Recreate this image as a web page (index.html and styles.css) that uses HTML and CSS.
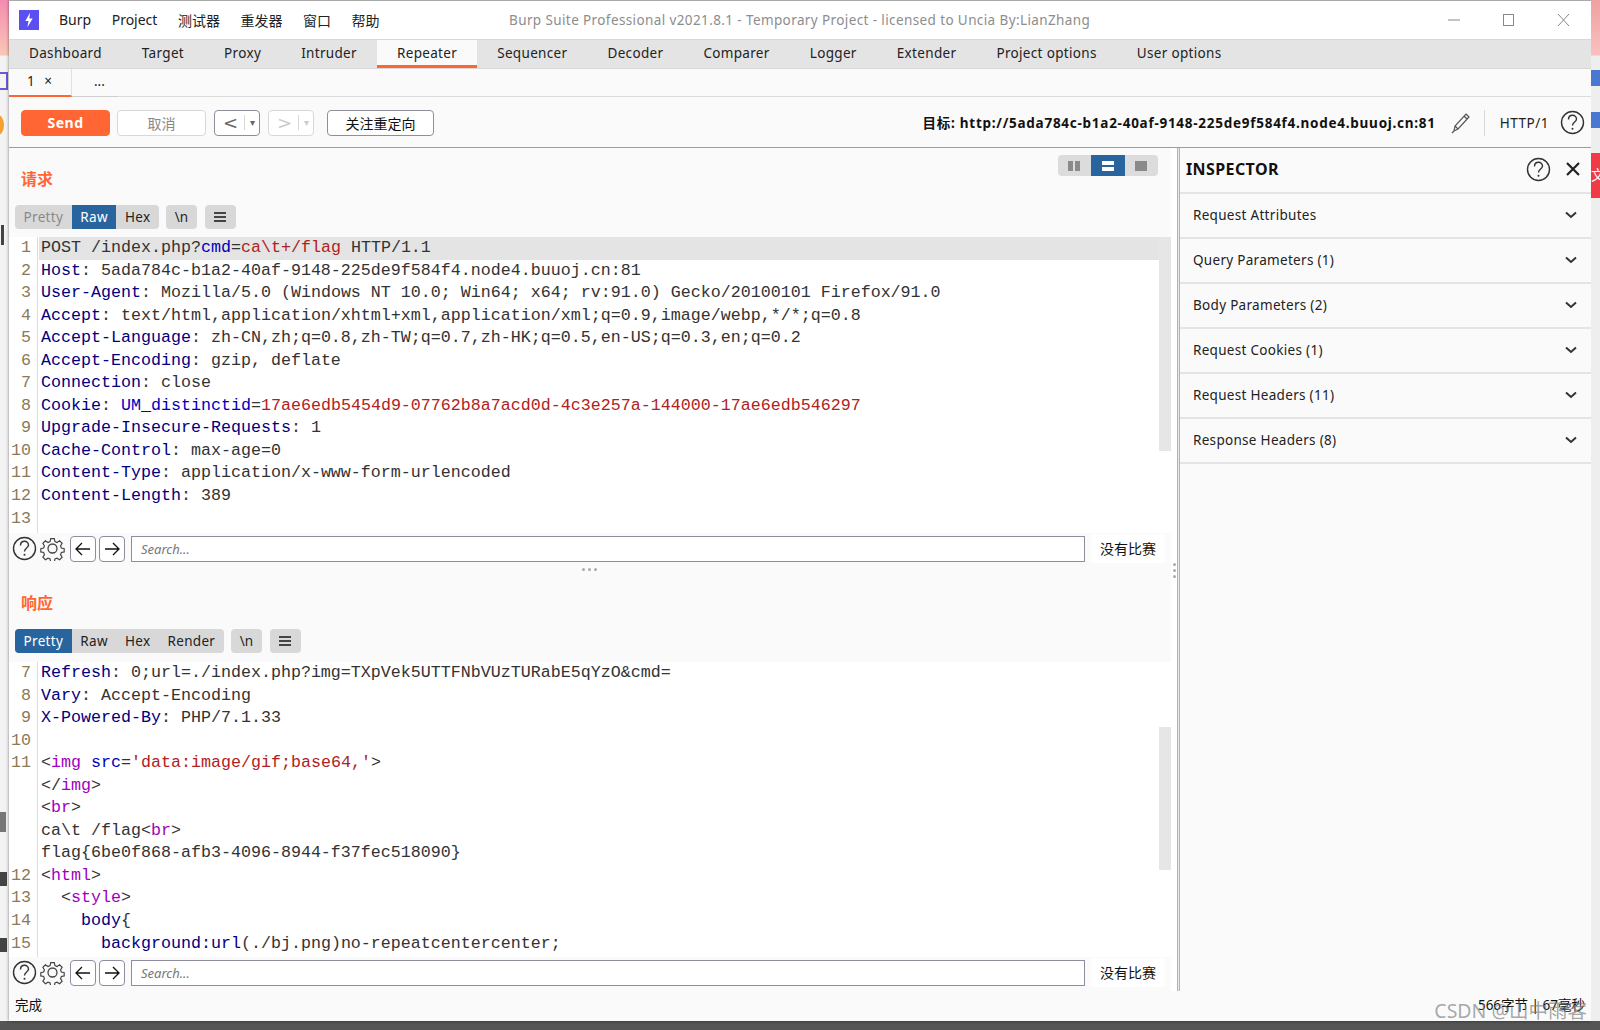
FILE: index.html
```html
<!DOCTYPE html>
<html lang="zh-CN">
<head>
  <meta charset="UTF-8">
  <title>Burp Suite Professional</title>
  <link rel="stylesheet" href="styles.css">
</head>
<body>
  <div class="desktop">
    <div class="strip strip-left">
      <i class="bit home"></i><i class="bit sun"></i><i class="bit dark d1"></i><i class="bit dark d2"></i><i class="bit dark d3"></i><i class="bit dark d4"></i>
    </div>
    <div class="window">
      <div class="titlebar">
        <svg class="logo" width="20" height="20" viewBox="0 0 19 19"><rect width="19" height="19" fill="#5a4ff0"/><path d="M10.500 2.500 6 10.500h3l-1 6 5-8.500h-3.200z" fill="#fff"/></svg>
        <nav class="menu"><span>Burp</span><span>Project</span><span>测试器</span><span>重发器</span><span>窗口</span><span>帮助</span></nav>
        <div class="title">Burp Suite Professional v2021.8.1 - Temporary Project - licensed to Uncia By:LianZhang</div>
        <div class="winctl">
          <svg width="14" height="14" viewBox="0 0 14 14"><path d="M1 7h12" stroke="#888"/></svg>
          <svg width="14" height="14" viewBox="0 0 14 14"><rect x="1.500" y="1.500" width="10" height="11" fill="none" stroke="#888"/></svg>
          <svg width="14" height="14" viewBox="0 0 14 14"><path d="M1 1l11 12M12 1 1 13" stroke="#888" fill="none"/></svg>
        </div>
      </div>

      <div class="tabs">
        <span class="tab">Dashboard</span><span class="tab">Target</span><span class="tab">Proxy</span><span class="tab">Intruder</span><span class="tab active">Repeater</span><span class="tab">Sequencer</span><span class="tab">Decoder</span><span class="tab">Comparer</span><span class="tab">Logger</span><span class="tab">Extender</span><span class="tab">Project options</span><span class="tab">User options</span>
      </div>

      <div class="subtabs">
        <div class="subtab active">1 <i>×</i></div>
        <div class="subtab more">...</div>
      </div>

      <div class="toolbar">
        <button class="btn send">Send</button>
        <button class="btn cancel">取消</button>
        <div class="btn nav"><b>&lt;</b><span class="sep"></span><em>▾</em></div>
        <div class="btn nav off"><b>&gt;</b><span class="sep"></span><em>▾</em></div>
        <button class="btn follow">关注重定向</button>
        <div class="target">目标: http://5ada784c-b1a2-40af-9148-225de9f584f4.node4.buuoj.cn:81</div>
        <svg class="pencil" width="22" height="24" viewBox="0 0 22 24"><path d="M16 3l3 3L8 18l-4 2 1-5zM14 5l3 3M5 15l3 3M4 20l-2 2" fill="none" stroke="#555" stroke-width="1.200"/></svg>
        <span class="proto">HTTP/1</span>
        <svg class="help" width="25" height="25" viewBox="0 0 25 25"><use href="#help"/></svg>
      </div>

      <div class="main">
        <div class="panes">
          <section class="pane req">
            <div class="layout-btns">
              <span><i class="b2v"></i></span><span class="on"><i class="b2h"></i></span><span><i class="b1"></i></span>
            </div>
            <h2>请求</h2>
            <div class="viewbar">
              <div class="seg"><span class="dim">Pretty</span><span class="on">Raw</span><span>Hex</span></div>
              <span class="chip">\n</span>
              <span class="chip burger"><i></i></span>
            </div>
            <div class="editor ed-req">
              <div class="gutter"><span>1</span><span>2</span><span>3</span><span>4</span><span>5</span><span>6</span><span>7</span><span>8</span><span>9</span><span>10</span><span>11</span><span>12</span><span>13</span></div>
              <div class="code">
                <div class="ln hl">POST /index.php?<span class="k">cmd</span>=<span class="v">ca\t+/flag</span> HTTP/1.1</div>
                <div class="ln"><span class="h">Host</span>: 5ada784c-b1a2-40af-9148-225de9f584f4.node4.buuoj.cn:81</div>
                <div class="ln"><span class="h">User-Agent</span>: Mozilla/5.0 (Windows NT 10.0; Win64; x64; rv:91.0) Gecko/20100101 Firefox/91.0</div>
                <div class="ln"><span class="h">Accept</span>: text/html,application/xhtml+xml,application/xml;q=0.9,image/webp,*/*;q=0.8</div>
                <div class="ln"><span class="h">Accept-Language</span>: zh-CN,zh;q=0.8,zh-TW;q=0.7,zh-HK;q=0.5,en-US;q=0.3,en;q=0.2</div>
                <div class="ln"><span class="h">Accept-Encoding</span>: gzip, deflate</div>
                <div class="ln"><span class="h">Connection</span>: close</div>
                <div class="ln"><span class="h">Cookie</span>: <span class="k">UM_distinctid</span>=<span class="v">17ae6edb5454d9-07762b8a7acd0d-4c3e257a-144000-17ae6edb546297</span></div>
                <div class="ln"><span class="h">Upgrade-Insecure-Requests</span>: 1</div>
                <div class="ln"><span class="h">Cache-Control</span>: max-age=0</div>
                <div class="ln"><span class="h">Content-Type</span>: application/x-www-form-urlencoded</div>
                <div class="ln"><span class="h">Content-Length</span>: 389</div>
              </div>
              <div class="scroll s-req"></div>
            </div>
            <div class="searchbar">
              <svg width="25" height="25" viewBox="0 0 25 25"><use href="#help"/></svg>
              <svg width="25" height="25" viewBox="0 0 25 25"><use href="#gear"/></svg>
              <span class="arrow"><svg width="18" height="14" viewBox="0 0 18 14"><path d="M2 7h14M8 1 2 7l6 6" fill="none" stroke="#111" stroke-width="1.300"/></svg></span>
              <span class="arrow"><svg width="18" height="14" viewBox="0 0 18 14"><path d="M2 7h14M10 1l6 6-6 6" fill="none" stroke="#111" stroke-width="1.300"/></svg></span>
              <div class="search">Search...</div>
              <span class="nomatch">没有比赛</span>
            </div>
            <div class="grip"><i></i><i></i><i></i></div>
          </section>

          <section class="pane res">
            <h2>响应</h2>
            <div class="viewbar">
              <div class="seg"><span class="on">Pretty</span><span>Raw</span><span>Hex</span><span>Render</span></div>
              <span class="chip">\n</span>
              <span class="chip burger"><i></i></span>
            </div>
            <div class="editor ed-res">
              <div class="gutter"><span>7</span><span>8</span><span>9</span><span>10</span><span>11</span><span>&nbsp;</span><span>&nbsp;</span><span>&nbsp;</span><span>&nbsp;</span><span>12</span><span>13</span><span>14</span><span>15</span></div>
              <div class="code">
                <div class="ln"><span class="h">Refresh</span>: 0;url=./index.php?img=TXpVek5UTTFNbVUzTURabE5qYzO&amp;cmd=</div>
                <div class="ln"><span class="h">Vary</span>: Accept-Encoding</div>
                <div class="ln"><span class="h">X-Powered-By</span>: PHP/7.1.33</div>
                <div class="ln">&nbsp;</div>
                <div class="ln">&lt;<span class="t">img</span> <span class="k">src</span>=<span class="v">'data:image/gif;base64,'</span>&gt;</div>
                <div class="ln">&lt;/<span class="t">img</span>&gt;</div>
                <div class="ln">&lt;<span class="t">br</span>&gt;</div>
                <div class="ln">ca\t /flag&lt;<span class="t">br</span>&gt;</div>
                <div class="ln">flag{6be0f868-afb3-4096-8944-f37fec518090}</div>
                <div class="ln">&lt;<span class="t">html</span>&gt;</div>
                <div class="ln">  &lt;<span class="t">style</span>&gt;</div>
                <div class="ln">    <span class="h">body</span>{</div>
                <div class="ln">      <span class="h">background:url</span>(./bj.png)no-repeatcentercenter;</div>
              </div>
              <div class="scroll s-res"></div>
            </div>
            <div class="searchbar">
              <svg width="25" height="25" viewBox="0 0 25 25"><use href="#help"/></svg>
              <svg width="25" height="25" viewBox="0 0 25 25"><use href="#gear"/></svg>
              <span class="arrow"><svg width="18" height="14" viewBox="0 0 18 14"><path d="M2 7h14M8 1 2 7l6 6" fill="none" stroke="#111" stroke-width="1.300"/></svg></span>
              <span class="arrow"><svg width="18" height="14" viewBox="0 0 18 14"><path d="M2 7h14M10 1l6 6-6 6" fill="none" stroke="#111" stroke-width="1.300"/></svg></span>
              <div class="search">Search...</div>
              <span class="nomatch">没有比赛</span>
            </div>
          </section>
        </div>

        <div class="splitter"><div class="dots"><i></i><i></i><i></i></div></div>

        <aside class="inspector">
          <div class="insp-head">
            <h3>INSPECTOR</h3>
            <svg width="25" height="25" viewBox="0 0 25 25"><use href="#help"/></svg>
            <svg class="close" width="16" height="16" viewBox="0 0 16 16"><path d="M2 2l12 12M14 2 2 14" stroke="#222" stroke-width="2.200"/></svg>
          </div>
          <div class="insp-row">Request Attributes<svg width="12" height="8" viewBox="0 0 12 8"><path d="M1 1.500 6 6l5-4.500" fill="none" stroke="#333" stroke-width="2"/></svg></div>
          <div class="insp-row">Query Parameters (1)<svg width="12" height="8" viewBox="0 0 12 8"><path d="M1 1.500 6 6l5-4.500" fill="none" stroke="#333" stroke-width="2"/></svg></div>
          <div class="insp-row">Body Parameters (2)<svg width="12" height="8" viewBox="0 0 12 8"><path d="M1 1.500 6 6l5-4.500" fill="none" stroke="#333" stroke-width="2"/></svg></div>
          <div class="insp-row">Request Cookies (1)<svg width="12" height="8" viewBox="0 0 12 8"><path d="M1 1.500 6 6l5-4.500" fill="none" stroke="#333" stroke-width="2"/></svg></div>
          <div class="insp-row">Request Headers (11)<svg width="12" height="8" viewBox="0 0 12 8"><path d="M1 1.500 6 6l5-4.500" fill="none" stroke="#333" stroke-width="2"/></svg></div>
          <div class="insp-row">Response Headers (8)<svg width="12" height="8" viewBox="0 0 12 8"><path d="M1 1.500 6 6l5-4.500" fill="none" stroke="#333" stroke-width="2"/></svg></div>
        </aside>
      </div>

      <div class="statusbar">
        <span>完成</span>
        <span class="stats">566字节 | 67毫秒</span>
      </div>
      <div class="watermark">CSDN @山中雨客</div>
    </div>
    <div class="strip strip-right">
      <i class="bit blue b-a"></i><i class="bit blue b-b"></i><span class="red">文</span>
    </div>
  </div>
  <div class="taskbar"></div>

  <svg class="defs" width="0" height="0">
    <symbol id="help" viewBox="0 0 25 25"><circle cx="12.500" cy="12.500" r="11" fill="none" stroke="#333" stroke-width="1.400"/><path d="M8.500 9.500c0-5.500 8-5.500 8-.5 0 3-4 3-4 6.500" fill="none" stroke="#333" stroke-width="1.400"/><circle cx="12.500" cy="18.800" r="1" fill="#333"/></symbol>
    <symbol id="gear" viewBox="0 0 25 25"><path d="M10.500 1.500h4l.7 3.300 2.300 1 2.900-1.800 2.800 2.800-1.800 2.900 1 2.300 3.100.7v3.600l-3.100.7-1 2.300 1.800 2.900-2.800 2.800-2.900-1.800-2.300 1-.7 3.300h-4l-.7-3.300-2.300-1-2.900 1.800-2.800-2.800 1.800-2.900-1-2.300-3.100-.7v-3.600l3.100-.7 1-2.300-1.800-2.900 2.800-2.800 2.900 1.800 2.300-1z" transform="translate(1.250 1.250) scale(.9)" fill="none" stroke="#444" stroke-width="1.300"/><circle cx="12.500" cy="12.500" r="4.500" fill="none" stroke="#444" stroke-width="1.300"/></symbol>
  </svg>
</body>
</html>
```

FILE: styles.css
```css
* {
  box-sizing: border-box;
}

html, body {
  margin: 0;
  height: 100%;
  overflow: hidden;
}

body {
  font-family: "Noto Sans", "Noto Sans CJK SC", sans-serif;
  font-size: 13.500px;
  color: #222;
  background: #555;
}

.desktop {
  display: flex;
  height: 1021px;
}

.taskbar {
  height: 9px;
  background: #555;
}

.defs {
  position: absolute;
}

.strip {
  position: relative;
  width: 9px;
  flex: none;
  background: #f3f3f3;
  overflow: hidden;
}

.strip-left {
  background: linear-gradient(#f48cb0 0, #f9c7b5 55px, #f3f3f3 56px);
}

.strip-right {
  background: linear-gradient(#f0a0a0 0, #f9c0c0 55px, #eeeeee 56px);
}

.bit {
  position: absolute;
  display: block;
}

.home {
  top: 72px;
  left: 0;
  width: 8px;
  height: 18px;
  border: 2px solid #6a5ad0;
  border-left: 0;
}

.sun {
  top: 115px;
  left: -8px;
  width: 12px;
  height: 20px;
  border-radius: 50%;
  background: #f5a030;
}

.dark {
  left: 0;
  width: 9px;
  background: #444;
}

.d1 { top: 225px; height: 20px; left: 1px; width: 3px; }
.d2 { top: 812px; height: 20px; width: 6px; background: #777; }
.d3 { top: 872px; height: 14px; width: 7px; }
.d4 { top: 938px; height: 14px; width: 7px; }

.blue {
  left: 0;
  width: 9px;
  height: 16px;
  background: #4a78d0;
}

.b-a { top: 70px; }
.b-b { top: 112px; }

.red {
  position: absolute;
  top: 153px;
  left: 0;
  width: 9px;
  height: 45px;
  background: #ee3b46;
  color: #fff;
  overflow: hidden;
  line-height: 45px;
}

.window {
  position: relative;
  flex: 1;
  min-width: 0;
  display: flex;
  flex-direction: column;
  background: #fafafa;
  border-top: 1px solid #aaa;
  box-shadow: 0 0 3px rgba(0, 0, 0, .5);
}

.titlebar {
  display: flex;
  align-items: center;
  height: 38px;
  background: #fff;
  padding-left: 10px;
  flex: none;
}

.menu {
  display: flex;
  margin-left: 20px;
  gap: 20.500px;
  font-size: 14px;
}

.title {
  position: absolute;
  left: 500px;
  top: 10px;
  color: #8d8d8d;
  font-size: 13.500px;
  letter-spacing: .39px;
}

.winctl {
  margin-left: auto;
  display: flex;
  gap: 41px;
  padding-right: 20px;
}

.tabs {
  display: flex;
  height: 30px;
  flex: none;
  background: #e4e4e4;
  border-top: 1px solid #d8d8d8;
  border-bottom: 1px solid #d8d8d8;
  align-items: stretch;
}

.tab {
  padding: 4px 20px 0;
  text-align: center;
  font-size: 13.500px;
  letter-spacing: .33px;
}

.tab.active {
  background: #fafafa;
  border-bottom: 3px solid #ff6633;
}

.subtabs {
  display: flex;
  height: 28px;
  flex: none;
  border-bottom: 1px solid #dcdcdc;
}

.subtab {
  width: 62px;
  padding: 3px 0 0 18px;
  font-size: 13.500px;
  border-right: 1px solid #e0e0e0;
}

.subtab i {
  font-style: normal;
  margin-left: 6px;
}

.subtab.active {
  width: 63px;
  border-bottom: 2px solid #ff6633;
  height: 28px;
}

.subtab.more {
  width: 46px;
  padding-left: 22px;
  border-right: 0;
  border-bottom: 1px solid #d0d0d0;
  height: 28px;
}

.toolbar {
  display: flex;
  align-items: center;
  height: 51px;
  flex: none;
  padding: 1px 0 0 12px;
  border-bottom: 1px solid #9c9ca8;
  background: #fafafa;
}

.btn {
  height: 26px;
  border-radius: 4px;
  border: 1px solid #d8d8d8;
  background: #fff;
  font-family: inherit;
  font-size: 14px;
  padding: 0;
}

.send {
  width: 89px;
  margin-right: 7px;
  background: #ff6633;
  border-color: #ff6633;
  color: #fff;
  font-weight: 700;
  letter-spacing: .5px;
}

.cancel {
  width: 89px;
  margin-right: 8px;
  color: #888;
}

.nav {
  display: flex;
  align-items: center;
  width: 46px;
  margin-right: 8px;
  border-color: #8e8e9e;
  padding-left: 8px;
  font-family: "DejaVu Sans", sans-serif;
  color: #666;
}

.nav.off {
  margin-right: 13px;
  border-color: #d8d8d8;
  color: #ccc;
}

.nav b {
  font-weight: 400;
  font-size: 18px;
  line-height: 20px;
}

.nav .sep {
  width: 1px;
  height: 15px;
  background: #d8d8d8;
  margin: 0 5px 0 6px;
}

.nav em {
  font-style: normal;
  font-size: 10px;
}

.follow {
  width: 107px;
  border-color: #8e8e9e;
  color: #111;
}

.target {
  margin-left: auto;
  margin-bottom: 2px;
  font-weight: 700;
  font-size: 13.500px;
  letter-spacing: .74px;
  color: #111;
}

.pencil {
  margin-left: 14px;
}

.proto {
  margin-left: 12px;
  padding-left: 15px;
  border-left: 1px solid #d8d8d8;
  height: 26px;
  line-height: 26px;
  letter-spacing: .5px;
}

.help {
  margin-left: 11px;
  margin-right: 6px;
}

.main {
  display: flex;
  flex: 1;
  min-height: 0;
}

.panes {
  width: 1162px;
  flex: none;
  display: flex;
  flex-direction: column;
}

.pane {
  position: relative;
}

.pane.req {
  height: 423px;
}

.pane.res {
  flex: 1;
}

.pane h2 {
  margin: 0;
  padding: 20px 0 0 12px;
  height: 57px;
  font-size: 16px;
  font-weight: 700;
  line-height: 22px;
  color: #ff6633;
}

.res h2 {
  height: 58px;
  padding-top: 21px;
}

.layout-btns {
  position: absolute;
  top: 7px;
  right: 13px;
  display: flex;
  border-radius: 4px;
  overflow: hidden;
}

.layout-btns span {
  width: 33.500px;
  height: 21px;
  background: #dcdcdc;
  display: flex;
  align-items: center;
  justify-content: center;
}

.layout-btns span.on {
  background: #28659f;
}

.layout-btns i {
  display: block;
  width: 12px;
  height: 10px;
  background: #8a8a8a;
}

.layout-btns .b2v {
  background: linear-gradient(90deg, #8a8a8a 5px, transparent 5px, transparent 7px, #8a8a8a 7px);
}

.layout-btns .b2h {
  background: linear-gradient(#fff 4px, transparent 4px, transparent 6px, #fff 6px);
}

.viewbar {
  display: flex;
  gap: 7px;
  height: 24px;
  padding-left: 6px;
}

.seg {
  display: flex;
  border-radius: 4px;
  overflow: hidden;
  background: #d8d8d8;
}

.seg span {
  padding: 0 8.600px;
  line-height: 24px;
  font-size: 13.500px;
  letter-spacing: .3px;
}

.seg span.on {
  background: #28659f;
  color: #fff;
}

.seg span.dim {
  color: #8a8a8a;
}

.chip {
  display: flex;
  align-items: center;
  justify-content: center;
  height: 24px;
  width: 31px;
  background: #d8d8d8;
  border-radius: 4px;
}

.burger {
  margin-left: 1px;
}

.burger i {
  display: block;
  width: 12px;
  height: 10px;
  border-top: 2px solid #444;
  border-bottom: 2px solid #444;
  background: linear-gradient(transparent 2px, #444 2px, #444 4px, transparent 4px);
}

.editor {
  position: relative;
  display: flex;
  margin-top: 8px;
  background: #fff;
  overflow: hidden;
}

.ed-req {
  height: 296px;
}

.ed-res {
  margin-top: 9px;
  height: 295px;
}

.gutter {
  width: 29px;
  flex: none;
  border-right: 1px solid #ddd;
  display: flex;
  flex-direction: column;
  padding-right: 6px;
  text-align: right;
}

.gutter span,
.code {
  font-family: "Liberation Mono", monospace;
  font-size: 16.660px;
  line-height: 22.550px;
}

.gutter span {
  display: block;
  color: #8a7a5a;
  height: 22.550px;
}

.code {
  flex: 1;
  padding-left: 3px;
  color: #333;
}

.ln {
  height: 22.550px;
  white-space: pre;
}

.ln.hl {
  margin-left: -2px;
  padding-left: 2px;
  background: #e4e4e4;
}

.code .h {
  color: #000080;
}

.code .k {
  color: #0000c0;
}

.code .v {
  color: #b02222;
}

.code .t {
  color: #a000c0;
}

.scroll {
  position: absolute;
  right: 0;
  width: 12px;
  background: #e6e6e6;
}

.s-req {
  top: 0;
  height: 214px;
}

.s-res {
  top: 65px;
  height: 143px;
}

.searchbar {
  display: flex;
  align-items: center;
  height: 31px;
  padding-left: 3px;
  gap: 3px;
  background: #fafafa;
}

.arrow {
  width: 26px;
  height: 26px;
  border: 1px solid #8e8e9e;
  border-radius: 4px;
  display: flex;
  align-items: center;
  justify-content: center;
  background: #fff;
}

.arrow:nth-of-type(1) {
  margin-left: 2px;
}

.search {
  width: 954px;
  height: 26px;
  margin-left: 3px;
  border: 1px solid #8e8e9e;
  background: #fff;
  padding-left: 9px;
  line-height: 24px;
  font-style: italic;
  color: #777;
  font-size: 13px;
}

.nomatch {
  margin-left: 3px;
  padding: 0 9px;
  font-size: 14px;
  line-height: 29px;
  background: #fff;
  color: #111;
}

.grip {
  position: absolute;
  left: 573px;
  top: 420px;
  display: flex;
  gap: 3px;
}

.grip i,
.dots i {
  display: block;
  width: 3px;
  height: 3px;
  border-radius: 50%;
  background: #aaa;
}

.splitter {
  position: relative;
  width: 9px;
  flex: none;
  background: linear-gradient(90deg, #fff 6px, #b4b4b4 6px, #b4b4b4 7px, #e8e8e8 7px, #e8e8e8 8px, #b4b4b4 8px);
}

.dots {
  position: absolute;
  left: 2px;
  top: 415px;
  display: flex;
  flex-direction: column;
  gap: 3px;
}

.inspector {
  flex: 1;
  min-width: 0;
  height: 100%;
}

.insp-head {
  display: flex;
  align-items: center;
  height: 46px;
  padding: 0 0 2px 6px;
  gap: 14px;
  border-bottom: 2px solid #e4e4e4;
}

.insp-head h3 {
  margin: 0 auto 0 0;
  font-size: 16px;
  font-weight: 700;
  letter-spacing: .4px;
  color: #111;
}

.insp-head .close {
  margin-right: 10px;
}

.insp-row {
  display: flex;
  align-items: center;
  justify-content: space-between;
  height: 45px;
  padding: 0 14px 2px 13px;
  border-bottom: 2px solid #e4e4e4;
  font-size: 13.500px;
  letter-spacing: .3px;
}

.statusbar {
  display: flex;
  align-items: center;
  justify-content: space-between;
  height: 30px;
  flex: none;
  padding: 0 6px 4px 6px;
  font-size: 13.500px;
  color: #111;
}

.watermark {
  position: absolute;
  right: 4px;
  bottom: -3px;
  font-size: 19.500px;
  color: rgba(120, 120, 120, .65);
  white-space: nowrap;
}
```
